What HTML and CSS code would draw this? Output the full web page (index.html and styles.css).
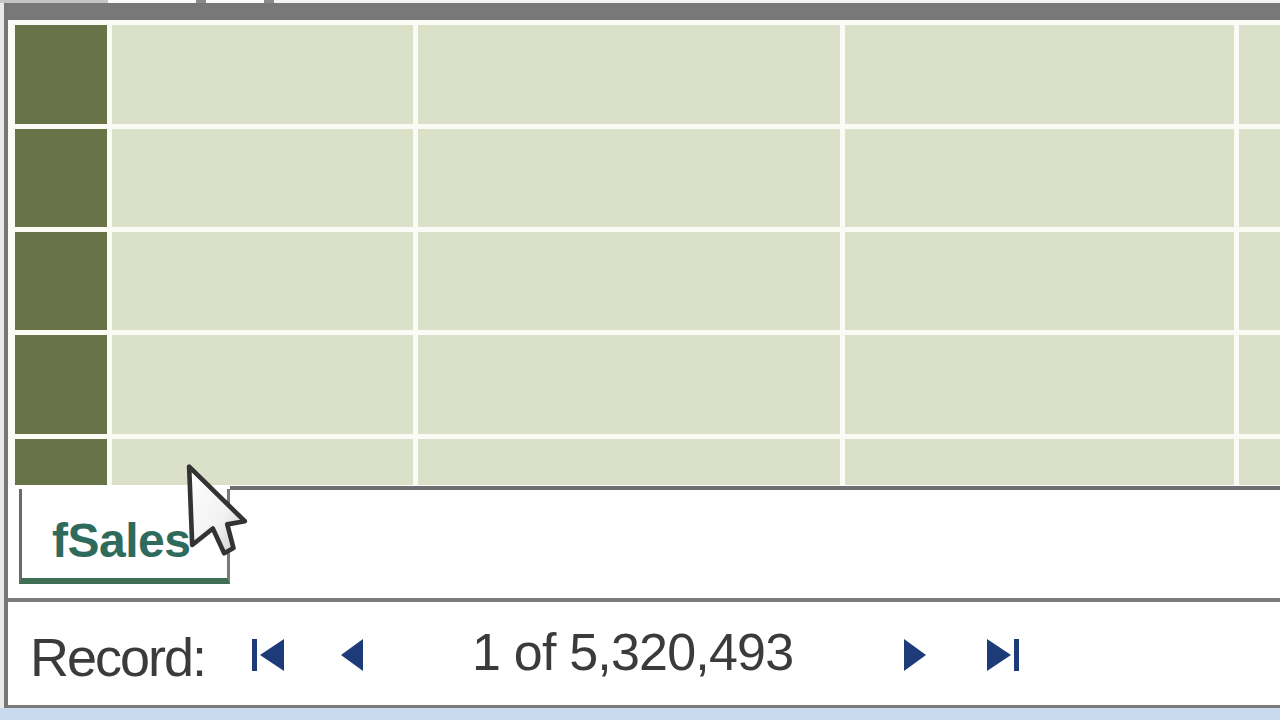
FILE: index.html
```html
<!DOCTYPE html>
<html>
<head>
<meta charset="utf-8">
<link rel="stylesheet" href="styles.css">
</head>
<body>
<div class="app">
  <div class="ruler">
    <span class="rs r1"></span><span class="rs r2"></span><span class="rs r3"></span><span class="rs r4"></span><span class="rs r5"></span>
  </div>
  <div class="main">
    <div class="hdr"></div>
    <div class="sheet">
      <div class="grid">
        <div class="sel"></div><div class="cell"></div><div class="cell"></div><div class="cell"></div><div class="cell"></div>
        <div class="sel"></div><div class="cell"></div><div class="cell"></div><div class="cell"></div><div class="cell"></div>
        <div class="sel"></div><div class="cell"></div><div class="cell"></div><div class="cell"></div><div class="cell"></div>
        <div class="sel"></div><div class="cell"></div><div class="cell"></div><div class="cell"></div><div class="cell"></div>
        <div class="sel"></div><div class="cell"></div><div class="cell"></div><div class="cell"></div><div class="cell"></div>
      </div>
    </div>
    <div class="tabs">
      <div class="tab-lead"></div>
      <div class="tab"><span class="tab-label">fSales</span></div>
      <div class="tab-rest"></div>
    </div>
    <div class="recbar">
      <span class="rec-label">Record:</span>
      <svg class="nav nav-first" width="34" height="34" viewBox="0 0 34 34"><rect x="1" y="1" width="5" height="32" fill="#1d3b78"/><polygon points="33,1 33,33 9,17" fill="#1d3b78"/></svg>
      <svg class="nav nav-prev" width="24" height="34" viewBox="0 0 24 34"><polygon points="23,1 23,33 1,17" fill="#1d3b78"/></svg>
      <span class="rec-count">1 of 5,320,493</span>
      <svg class="nav nav-next" width="24" height="34" viewBox="0 0 24 34"><polygon points="1,1 1,33 23,17" fill="#1d3b78"/></svg>
      <svg class="nav nav-last" width="34" height="34" viewBox="0 0 34 34"><polygon points="1,1 1,33 25,17" fill="#1d3b78"/><rect x="28" y="1" width="5" height="32" fill="#1d3b78"/></svg>
    </div>
  </div>
  <div class="footer"></div>
  <svg class="cursor" width="66" height="100" viewBox="0 0 64 96">
    <defs>
      <linearGradient id="cg" x1="0" y1="0" x2="1" y2="1">
        <stop offset="0" stop-color="#ffffff"/>
        <stop offset="0.6" stop-color="#f2f2f2"/>
        <stop offset="1" stop-color="#c8c8c8"/>
      </linearGradient>
    </defs>
    <path d="M4 3 L7 79 L27 63 L38 87 L47 82 L41 59 L58 56 Z" fill="url(#cg)" stroke="#333" stroke-width="4.5" stroke-linejoin="round"/>
  </svg>
</div>
</body>
</html>
```

FILE: styles.css
```css
html, body {
  margin: 0;
  padding: 0;
}
body {
  width: 1280px;
  height: 720px;
  overflow: hidden;
  background: #e9e9e9;
  font-family: "Liberation Sans", Arial, sans-serif;
}
.app {
  position: relative;
  width: 1280px;
  height: 720px;
  display: flex;
  flex-direction: column;
}
.ruler {
  height: 3px;
  display: flex;
  background: #f3f3f3;
}
.rs { height: 3px; display: block; }
.r1 { width: 108px; background: #c4c4c4; }
.r2 { width: 88px; background: #fbfbfb; }
.r3 { width: 10px; background: #8a8a8a; }
.r4 { width: 58px; background: #fbfbfb; }
.r5 { width: 10px; background: #8a8a8a; }
.main {
  flex: 1;
  margin-left: 4px;
  border-left: 4px solid #767676;
  background: #ffffff;
  display: flex;
  flex-direction: column;
  min-height: 0;
}
.hdr {
  height: 17px;
  background: #787878;
}
.sheet {
  padding: 5px 0 0 7px;
  background: #fbfbf8;
}
.grid {
  display: grid;
  grid-template-columns: 92px 301px 422px 389px 41px;
  grid-template-rows: 99px 98px 98px 99px 46px;
  column-gap: 5px;
  row-gap: 5px;
  background: #fbfbf6;
}
.sel { background: #687447; }
.cell { background: #dbe1c8; }
.tabs {
  height: 113px;
  display: flex;
  align-items: flex-start;
}
.tab-lead {
  width: 11px;
}
.tab {
  width: 205px;
  height: 89px;
  margin-top: 4px;
  border-left: 3px solid #6a6a6a;
  border-right: 3px solid #7a7a7a;
  border-bottom: 6px solid #3f6e55;
  display: flex;
  align-items: flex-end;
  box-sizing: content-box;
}
.tab-label {
  margin-left: 30px;
  margin-bottom: 13px;
  font-size: 48px;
  font-weight: bold;
  color: #2f6b5d;
  letter-spacing: -0.5px;
  line-height: 1;
}
.tab-rest {
  flex: 1;
  height: 0;
  margin-top: 1px;
  border-top: 4px solid #6e6e6e;
}
.recbar {
  flex: 1;
  border-top: 4px solid #7b7b7b;
  border-bottom: 3px solid #7b7b7b;
  display: flex;
  align-items: center;
  color: #3b3b3b;
}
.rec-label {
  margin-left: 22px;
  width: 175px;
  font-size: 54px;
  letter-spacing: -2px;
  line-height: 1;
  margin-top: 6px;
  white-space: nowrap;
}
.rec-count {
  margin-left: 108px;
  width: 321px;
  font-size: 52px;
  letter-spacing: -0.8px;
  line-height: 1;
  margin-top: -4px;
  white-space: nowrap;
}
.nav { display: block; margin-top: 2px; }
.nav-first { margin-left: 46px; }
.nav-prev { margin-left: 55px; }
.nav-next { margin-left: 110px; }
.nav-last { margin-left: 59px; }
.footer {
  height: 12px;
  background: #c9d9ee;
}
.cursor {
  position: absolute;
  left: 185px;
  top: 463px;
}
```
